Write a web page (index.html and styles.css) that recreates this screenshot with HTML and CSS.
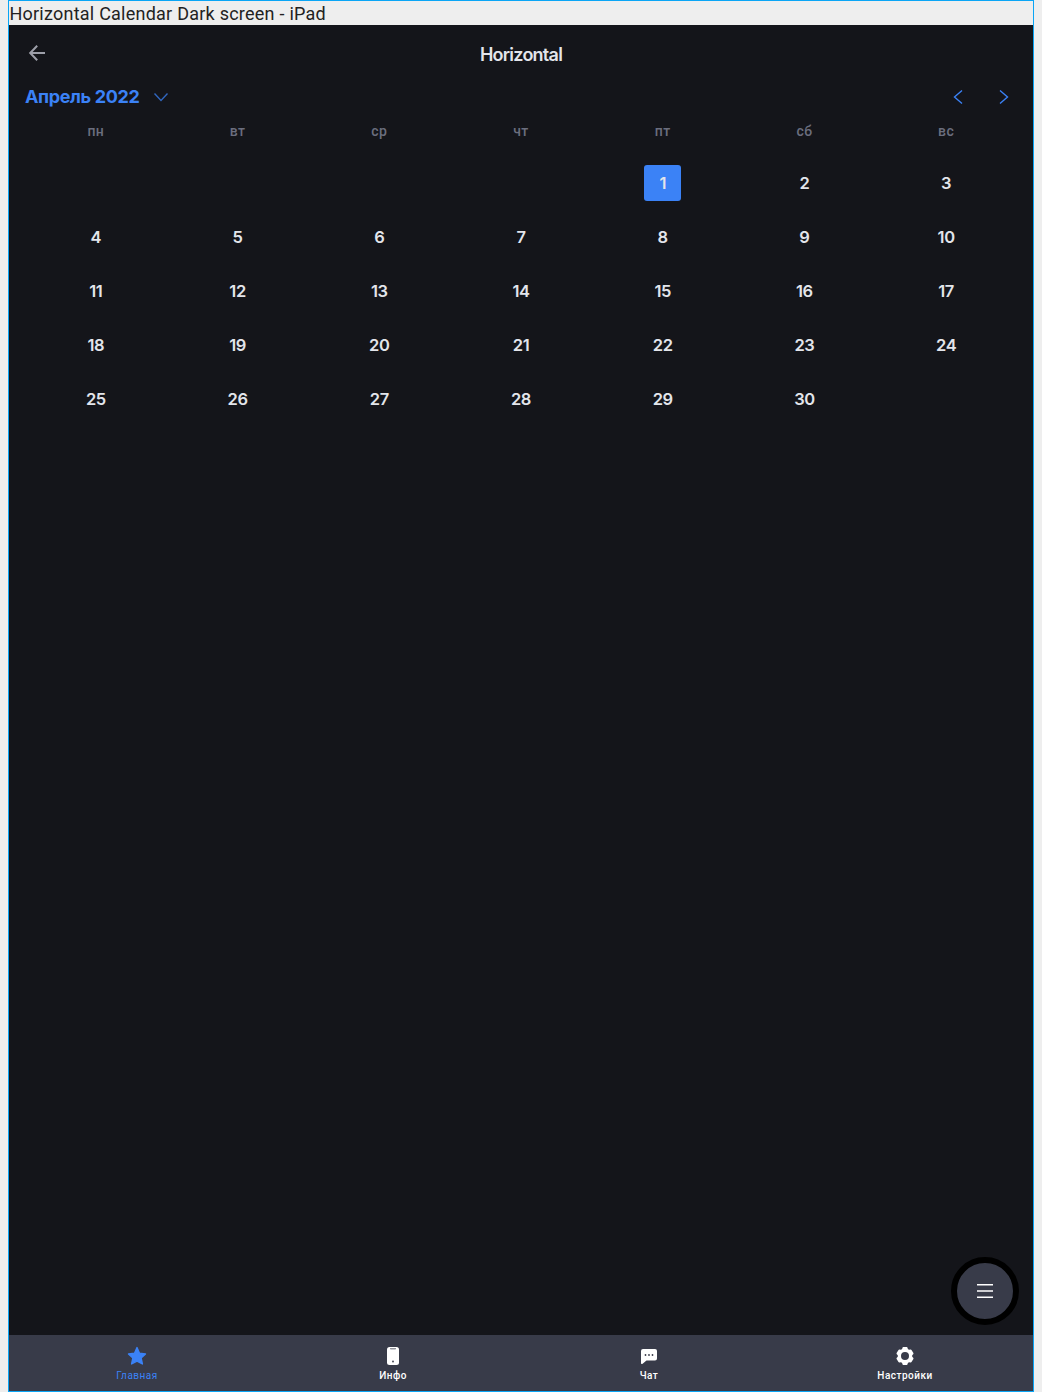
FILE: index.html
```html
<!DOCTYPE html>
<html lang="ru">
<head>
<meta charset="utf-8">
<title>Horizontal Calendar</title>
<link rel="stylesheet" href="styles.css">
</head>
<body>
<div class="frame">
  <div class="caption"><span class="caption-text">Horizontal Calendar Dark screen - iPad</span></div>
  <main class="screen">
    <header class="topbar">
      <svg class="back" width="24" height="24" viewBox="0 0 24 24"><path d="M20 12H5.500M12.200 4.800L5.200 12l7 7.200"/></svg>
      <h1 class="title"><span class="title-text">Horizontal</span></h1>
    </header>
    <div class="monthbar">
      <span class="month">Апрель 2022</span>
      <svg class="chevron down" width="16" height="16" viewBox="0 0 16 16"><path d="M1.500 4.500L8 11.500l6.500-7"/></svg>
      <svg class="chevron prev" width="16" height="16" viewBox="0 0 16 16"><path d="M12 1.500L4.500 8l7.500 6.500"/></svg>
      <svg class="chevron" width="16" height="16" viewBox="0 0 16 16"><path d="M4 1.500L11.500 8L4 14.500"/></svg>
    </div>
    <div class="weekdays"><span>пн</span><span>вт</span><span>ср</span><span>чт</span><span>пт</span><span>сб</span><span>вс</span></div>
    <div class="days">
      <span class="day first"><b class="selected">1</b></span><span class="day">2</span><span class="day">3</span>
      <span class="day">4</span><span class="day">5</span><span class="day">6</span><span class="day">7</span><span class="day">8</span><span class="day">9</span><span class="day">10</span>
      <span class="day">11</span><span class="day">12</span><span class="day">13</span><span class="day">14</span><span class="day">15</span><span class="day">16</span><span class="day">17</span>
      <span class="day">18</span><span class="day">19</span><span class="day">20</span><span class="day">21</span><span class="day">22</span><span class="day">23</span><span class="day">24</span>
      <span class="day">25</span><span class="day">26</span><span class="day">27</span><span class="day">28</span><span class="day">29</span><span class="day">30</span>
    </div>
    <div class="fab"><svg width="16" height="16" viewBox="0 0 16 16"><path d="M0 1.750h16M0 8h16M0 14.250h16"/></svg></div>
  </main>
  <nav class="tabs">
    <div class="tab active">
      <svg width="20" height="20" viewBox="0 0 20 20"><path d="M10 1.600l2.500 5.600 6 .7-4.400 4.100 1.300 6-5.400-2.900L4.600 18l1.300-6L1.500 7.900l6-.7z" stroke="currentColor" stroke-width="1.400" stroke-linejoin="round"/></svg>
      <span class="label">Главная</span>
    </div>
    <div class="tab">
      <svg width="20" height="20" viewBox="0 0 20 20"><rect x="4" y="1" width="12" height="18" rx="2.500"/><path class="cut" d="M7 2h6v.7q0 .8-.8.8H7.800Q7 3.500 7 2.700z" opacity=".55"/><circle class="cut" cx="10" cy="15.500" r=".9"/></svg>
      <span class="label">Инфо</span>
    </div>
    <div class="tab">
      <svg width="20" height="20" viewBox="0 0 20 20"><path d="M4 3h12q2 0 2 2v7.500q0 2-2 2H7.500L3.600 17.700Q2 18.700 2 17V5q0-2 2-2z"/><circle class="cut" cx="6.500" cy="9" r=".9"/><circle class="cut" cx="10" cy="9" r=".9"/><circle class="cut" cx="13.500" cy="9" r=".9"/></svg>
      <span class="label">Чат</span>
    </div>
    <div class="tab">
      <svg width="20" height="20" viewBox="0 0 20 20"><path fill-rule="evenodd" d="M8.300 1h3.400q.7 0 .8.700l.4 1.400 1.100.7 1.500-.3q.7-.2 1 .4l1.900 3.200q.3.600-.2 1.100l-1 1v1.600l1 1q.5.500.2 1.100l-1.900 3.200q-.3.600-1 .4l-1.500-.3-1.100.7-.4 1.400q-.1.700-.8.700H8.300q-.7 0-.8-.7l-.4-1.400-1.100-.7-1.500.3q-.7.200-1-.4l-1.900-3.200q-.3-.6.2-1.100l1-1V9.200l-1-1q-.5-.5-.2-1.100l1.900-3.200q.3-.6 1-.4l1.500.3 1.100-.7.400-1.400Q7.600 1 8.300 1zM10 6a4 4 0 1 0 0 8a4 4 0 1 0 0-8z"/></svg>
      <span class="label">Настройки</span>
    </div>
  </nav>
</div>
</body>
</html>
```

FILE: styles.css
```css
* { box-sizing: border-box; }
body { margin: 0; background: #eee; font-family: Inter, sans-serif; }
.frame {
  width: 1026px;
  height: 1392px;
  margin-left: 8px;
  border: 1px solid #0aa5f5;
  display: flex;
  flex-direction: column;
}
.caption {
  height: 24px;
  flex: none;
  padding-left: .4px;
  font: 400 18px/26px Roboto, sans-serif;
  letter-spacing: .24px;
  color: #222;
  white-space: nowrap;
}
.screen { position: relative; flex: 1; background: #14151a; }
.topbar {
  height: 56px;
  padding: 0 16px;
  display: grid;
  grid-template-columns: 24px 1fr 24px;
  align-items: center;
}
.back { fill: none; stroke: #9d9fa9; stroke-width: 2; }
.title {
  margin: 3px 0 0;
  text-align: center;
  font-size: 18px;
  line-height: 24px;
  font-weight: 600;
  letter-spacing: -.75px;
  color: #e3e5eb;
}
.monthbar { height: 32px; padding: 0 21px 0 16px; display: flex; align-items: center; }
.month {
  width: 114px;
  white-space: nowrap;
  font-size: 18px;
  line-height: 24px;
  font-weight: 650;
  letter-spacing: -.36px;
  color: #3b82f6;
}
.chevron { fill: none; stroke: #3b82f6; stroke-width: 1.4; }
.down { margin-left: 14px; opacity: .75; }
.prev { margin-left: auto; margin-right: 30px; }
.weekdays, .days { display: grid; grid-template-columns: repeat(7, 1fr); margin: 0 16px; text-align: center; }
.weekdays {
  height: 18px;
  margin-top: 9px;
  font: 500 14px/18px Roboto, sans-serif;
  letter-spacing: .4px;
  color: #6b6e7e;
}
.days { margin-top: 16px; grid-auto-rows: 54px; }
.day {
  display: flex;
  align-items: center;
  justify-content: center;
  font-size: 16.5px;
  line-height: 20px;
  font-weight: 600;
  letter-spacing: -.4px;
  color: #e3e5eb;
}
.first { grid-column: 5; }
.selected {
  width: 36.500px;
  height: 36px;
  border-radius: 3px;
  background: #3b82f6;
  line-height: 36px;
  text-align: center;
  font-weight: 600;
}
.fab {
  position: absolute;
  right: 14px;
  bottom: 10px;
  width: 68px;
  height: 68px;
  border: 6px solid #000;
  border-radius: 50%;
  background: #383b49;
  display: flex;
  align-items: center;
  justify-content: center;
}
.fab svg { stroke: #fff; stroke-width: 1.5; }
.tabs { height: 56px; flex: none; display: grid; grid-template-columns: repeat(4, 1fr); background: #383b49; }
.tab { display: flex; flex-direction: column; align-items: center; padding-top: 11px; color: #fff; }
.tab svg { fill: currentColor; }
.tab .cut { fill: #383b49; }
.active { color: #3b82f6; }
.label { font: 500 10px/12px Roboto, sans-serif; letter-spacing: .5px; margin-top: 4px; }
.active .label { font-weight: 400; }
```
